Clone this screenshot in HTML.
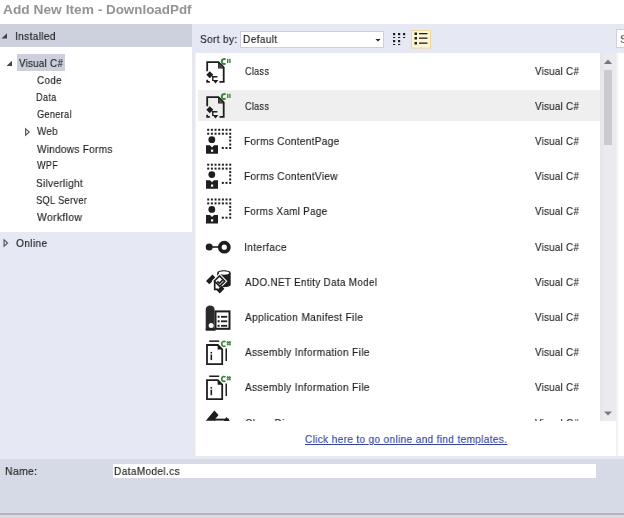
<!DOCTYPE html>
<html><head><meta charset="utf-8">
<style>
html,body{margin:0;padding:0;}
body{width:624px;height:518px;position:relative;overflow:hidden;background:#fff;font-family:"Liberation Sans",sans-serif;font-size:11px;color:#1e1e1e;}
.a{position:absolute;}
.t{position:absolute;white-space:nowrap;transform-origin:0 0;line-height:14px;will-change:transform;-webkit-text-stroke:0.15px currentColor;}
</style></head><body>
<div class="a" style="left:0;top:24px;width:192px;height:23px;background:#cdd1dd"></div>
<div class="a" style="left:0;top:47px;width:193px;height:185px;background:#fff"></div>
<div class="a" style="left:0;top:232px;width:196px;height:227px;background:#e6e9f4"></div>
<div class="a" style="left:192px;top:24px;width:4px;height:435px;background:#e6e9f4"></div>
<div class="a" style="left:192px;top:53px;width:3px;height:403px;background:#e5e8ef"></div>
<div class="a" style="left:195px;top:53px;width:1px;height:403px;background:#f0f2f6"></div>
<div class="a" style="left:196px;top:24px;width:428px;height:29px;background:#e6e9f4"></div>
<div class="a" style="left:196px;top:53px;width:420px;height:403px;background:#fff"></div>
<div class="a" style="left:616px;top:53px;width:8px;height:403px;background:#fefefe"></div>
<div class="a" style="left:616px;top:53px;width:2px;height:403px;background:#f1f1f5"></div>
<div class="a" style="left:196px;top:456px;width:428px;height:3px;background:#e6e9f4"></div>
<div class="a" style="left:0;top:459px;width:624px;height:53px;background:#d6dae7"></div>
<div class="a" style="left:0;top:512px;width:624px;height:1px;background:#dcdbe7"></div>
<div class="a" style="left:0;top:513px;width:624px;height:2px;background:#b5b3bd"></div>
<div class="a" style="left:0;top:515px;width:624px;height:3px;background:#dcdcdc"></div>
<div class="t" style="left:2.70px;top:2.80px;font-size:13px;font-weight:bold;color:#939393;transform:scaleX(1.0576);-webkit-text-stroke:0;">Add New Item</div>
<div class="t" style="left:98.30px;top:2.80px;font-size:13px;font-weight:bold;color:#939393;transform:scaleX(0.9750);-webkit-text-stroke:0;">-</div>
<div class="t" style="left:105.77px;top:2.80px;font-size:13px;font-weight:bold;color:#939393;transform:scaleX(1.0305);-webkit-text-stroke:0;">DownloadPdf</div>
<div class="a" style="left:17px;top:54px;width:48px;height:17px;background:#cdd0dc"></div>
<div class="t" style="left:14.71px;top:28.60px;font-size:11.5px;letter-spacing:0.35px;transform:scaleX(0.8864);">Installed</div>
<div class="t" style="left:19.20px;top:56.00px;font-size:11.5px;letter-spacing:0.35px;transform:scaleX(0.8462);">Visual C#</div>
<div class="t" style="left:36.70px;top:73.00px;font-size:11.5px;letter-spacing:0.35px;transform:scaleX(0.8571);">Code</div>
<div class="t" style="left:35.90px;top:90.00px;font-size:11.5px;letter-spacing:0.35px;transform:scaleX(0.8000);">Data</div>
<div class="t" style="left:36.70px;top:107.00px;font-size:11.5px;letter-spacing:0.35px;transform:scaleX(0.8023);">General</div>
<div class="t" style="left:36.70px;top:124.00px;font-size:11.5px;letter-spacing:0.35px;transform:scaleX(0.8542);">Web</div>
<div class="t" style="left:36.70px;top:141.50px;font-size:11.5px;letter-spacing:0.35px;transform:scaleX(0.8690);">Windows Forms</div>
<div class="t" style="left:36.70px;top:158.00px;font-size:11.5px;letter-spacing:0.35px;transform:scaleX(0.7885);">WPF</div>
<div class="t" style="left:35.83px;top:175.50px;font-size:11.5px;letter-spacing:0.35px;transform:scaleX(0.8736);">Silverlight</div>
<div class="t" style="left:35.89px;top:192.50px;font-size:11.5px;letter-spacing:0.35px;transform:scaleX(0.8097);">SQL Server</div>
<div class="t" style="left:36.70px;top:209.50px;font-size:11.5px;letter-spacing:0.35px;transform:scaleX(0.9060);">Workflow</div>
<div class="t" style="left:15.90px;top:236.30px;font-size:11.5px;letter-spacing:0.35px;transform:scaleX(0.8914);">Online</div>
<svg class="a" style="left:0;top:0" width="200" height="260"><g fill="#444"><path d="M1.5,38.5 L7,33.3 L7,38.5 Z"/><path d="M6.5,66 L12,60.8 L12,66 Z"/></g><g fill="none" stroke="#5a5a5a" stroke-width="1.2"><path d="M25.6,128.9 L29.3,132 L25.6,135.1 Z"/><path d="M4.1,239.9 L7.6,243 L4.1,246.1 Z"/></g></svg>
<div class="t" style="left:199.72px;top:32.40px;font-size:11.5px;letter-spacing:0.35px;transform:scaleX(0.8825);">Sort by:</div>
<div class="a" style="left:240px;top:31px;width:142px;height:15px;background:#fff;border:1px solid #cdd0da"></div>
<div class="t" style="left:242.72px;top:32.40px;font-size:11.5px;letter-spacing:0.35px;transform:scaleX(0.8842);">Default</div>
<svg class="a" style="left:0;top:0" width="624" height="60"><path d="M375.5,39 L380.5,39 L378,41.5 Z" fill="#1e1e1e"/><g fill="#1e1e1e"><rect x="393" y="33" width="2.2" height="2.2"/><rect x="398" y="33" width="2.2" height="2.2"/><rect x="403" y="33" width="2.2" height="2.2"/><rect x="393" y="37" width="2.2" height="1"/><rect x="398" y="37" width="2.2" height="1"/><rect x="403" y="37" width="2.2" height="1"/><rect x="393" y="40" width="2.2" height="2.2"/><rect x="398" y="40" width="2.2" height="2.2"/><rect x="393" y="44" width="2.2" height="1"/><rect x="398" y="44" width="2.2" height="1"/></g><rect x="411.5" y="30.5" width="19" height="17.5" fill="#fcf5d4" stroke="#ecd69c" stroke-width="1"/><g fill="#1e1e1e"><rect x="414.5" y="32.5" width="2.5" height="2.5"/><rect x="414.5" y="37" width="2.5" height="2.5"/><rect x="414.5" y="42" width="2.5" height="2.5"/><rect x="419" y="33" width="8.5" height="1.3"/><rect x="419" y="37.5" width="8.5" height="1.3"/><rect x="419" y="42.5" width="8.5" height="1.3"/></g></svg>
<div class="a" style="left:616px;top:29px;width:12px;height:17px;background:#fff;border:1px solid #cfd2dc"></div>
<div class="t" style="left:619.60px;top:32.00px;font-size:11.5px;letter-spacing:0.35px;color:#5a5a5a;">S</div>
<div class="a" style="left:196px;top:53px;width:404px;height:368.5px;overflow:hidden" id="lv">
<div class="a" style="left:2px;top:37px;width:402px;height:31px;background:#efefef"></div>
</div>
<div class="a" style="left:600px;top:53px;width:16px;height:368px;background:#eaeaef"></div>
<div class="a" style="left:600px;top:53px;width:3px;height:368px;background:#e5e5eb"></div>
<div class="a" style="left:604px;top:69.7px;width:8px;height:75px;background:#cacad0"></div>
<svg class="a" style="left:600px;top:53px" width="16" height="369"><path d="M3.8,11 L12.2,11 L8,6.5 Z" fill="#77777f"/><path d="M4,358.5 L12,358.5 L8,362.5 Z" fill="#77777f"/></svg>
<div class="a" style="left:196px;top:53px;width:404px;height:368.5px;overflow:hidden">
<div class="a" style="left:2px;top:37px;width:402px;height:31px;background:#efefef"></div>
</div>
<div class="a" style="left:196px;top:53px;width:404px;height:368px;overflow:hidden"><div class="a" style="left:-196px;top:-53px;width:624px;height:518px">
<svg class="a" style="left:0;top:0" width="624" height="440"><g transform="translate(0,0)"><path d="M207.2,71.2 V62.1 H218.4 L223.7,67.4 V81.8 H219.5" fill="none" stroke="#1e1e1e" stroke-width="1.8"/><path d="M207.2,79.8 V81.8 H209.8" fill="none" stroke="#1e1e1e" stroke-width="1.8"/><path d="M218.8,62.6 V67.9 H223.4" fill="none" stroke="#1e1e1e" stroke-width="1.4"/><path d="M218.8,63 V67.9 H223 Z" fill="#444"/><path d="M209.8,71.3 L213.3,74.8 L209.8,78.3 L206.3,74.8 Z" fill="#1e1e1e"/><path d="M212,76.8 H217.4 M212.8,76.8 V81" stroke="#1e1e1e" stroke-width="1.4" fill="none"/><path d="M212.6,80 L218.4,80 L215.5,83.4 Z" fill="#1e1e1e"/><path d="M225.5,59.699999999999996 C224.70000000000002,58.8 221.8,58.6 221.8,61.55 C221.8,64.5 224.70000000000002,64.3 225.5,63.4" fill="none" stroke="#3a853a" stroke-width="2"/><rect x="227.0" y="58.8" width="1.4" height="4.2" fill="#3a853a"/><rect x="229.20000000000002" y="58.8" width="1.4" height="4.2" fill="#3a853a"/></g><g transform="translate(0,35)"><path d="M207.2,71.2 V62.1 H218.4 L223.7,67.4 V81.8 H219.5" fill="none" stroke="#1e1e1e" stroke-width="1.8"/><path d="M207.2,79.8 V81.8 H209.8" fill="none" stroke="#1e1e1e" stroke-width="1.8"/><path d="M218.8,62.6 V67.9 H223.4" fill="none" stroke="#1e1e1e" stroke-width="1.4"/><path d="M218.8,63 V67.9 H223 Z" fill="#444"/><path d="M209.8,71.3 L213.3,74.8 L209.8,78.3 L206.3,74.8 Z" fill="#1e1e1e"/><path d="M212,76.8 H217.4 M212.8,76.8 V81" stroke="#1e1e1e" stroke-width="1.4" fill="none"/><path d="M212.6,80 L218.4,80 L215.5,83.4 Z" fill="#1e1e1e"/><path d="M225.5,59.699999999999996 C224.70000000000002,58.8 221.8,58.6 221.8,61.55 C221.8,64.5 224.70000000000002,64.3 225.5,63.4" fill="none" stroke="#3a853a" stroke-width="2"/><rect x="227.0" y="58.8" width="1.4" height="4.2" fill="#3a853a"/><rect x="229.20000000000002" y="58.8" width="1.4" height="4.2" fill="#3a853a"/></g><g transform="translate(0,125.4)" fill="#1e1e1e"><rect x="207.20" y="3.40" width="2" height="2"/><rect x="210.87" y="3.40" width="2" height="2"/><rect x="214.54" y="3.40" width="2" height="2"/><rect x="218.21" y="3.40" width="2" height="2"/><rect x="221.88" y="3.40" width="2" height="2"/><rect x="225.55" y="3.40" width="2" height="2"/><rect x="229.22" y="3.40" width="2" height="2"/><rect x="207.20" y="7.30" width="2" height="2"/><rect x="210.87" y="7.30" width="2" height="2"/><rect x="214.54" y="7.30" width="2" height="2"/><rect x="218.21" y="7.30" width="2" height="2"/><rect x="221.88" y="7.30" width="2" height="2"/><rect x="225.55" y="7.30" width="2" height="2"/><rect x="229.22" y="7.30" width="2" height="2"/><rect x="229.2" y="10.80" width="2" height="2"/><rect x="229.2" y="14.20" width="2" height="2"/><rect x="229.2" y="18.10" width="2" height="2"/><rect x="229.2" y="21.60" width="2" height="2"/><rect x="221.8" y="21.6" width="2" height="2"/><rect x="225.5" y="21.6" width="2" height="2"/><circle cx="211.8" cy="14.3" r="3.4"/><path d="M206,19.9 H210 L212,22 L214,19.9 H218 V28.4 H206 Z"/><rect x="211" y="24.2" width="2.2" height="2.2" fill="#fff"/></g><g transform="translate(0,160.3)" fill="#1e1e1e"><rect x="207.20" y="3.40" width="2" height="2"/><rect x="210.87" y="3.40" width="2" height="2"/><rect x="214.54" y="3.40" width="2" height="2"/><rect x="218.21" y="3.40" width="2" height="2"/><rect x="221.88" y="3.40" width="2" height="2"/><rect x="225.55" y="3.40" width="2" height="2"/><rect x="229.22" y="3.40" width="2" height="2"/><rect x="207.20" y="7.30" width="2" height="2"/><rect x="210.87" y="7.30" width="2" height="2"/><rect x="214.54" y="7.30" width="2" height="2"/><rect x="218.21" y="7.30" width="2" height="2"/><rect x="221.88" y="7.30" width="2" height="2"/><rect x="225.55" y="7.30" width="2" height="2"/><rect x="229.22" y="7.30" width="2" height="2"/><rect x="229.2" y="10.80" width="2" height="2"/><rect x="229.2" y="14.20" width="2" height="2"/><rect x="229.2" y="18.10" width="2" height="2"/><rect x="229.2" y="21.60" width="2" height="2"/><rect x="221.8" y="21.6" width="2" height="2"/><rect x="225.5" y="21.6" width="2" height="2"/><circle cx="211.8" cy="14.3" r="3.4"/><path d="M206,19.9 H210 L212,22 L214,19.9 H218 V28.4 H206 Z"/><rect x="211" y="24.2" width="2.2" height="2.2" fill="#fff"/></g><g transform="translate(0,195.1)" fill="#1e1e1e"><rect x="207.20" y="3.40" width="2" height="2"/><rect x="210.87" y="3.40" width="2" height="2"/><rect x="214.54" y="3.40" width="2" height="2"/><rect x="218.21" y="3.40" width="2" height="2"/><rect x="221.88" y="3.40" width="2" height="2"/><rect x="225.55" y="3.40" width="2" height="2"/><rect x="229.22" y="3.40" width="2" height="2"/><rect x="207.20" y="7.30" width="2" height="2"/><rect x="210.87" y="7.30" width="2" height="2"/><rect x="214.54" y="7.30" width="2" height="2"/><rect x="218.21" y="7.30" width="2" height="2"/><rect x="221.88" y="7.30" width="2" height="2"/><rect x="225.55" y="7.30" width="2" height="2"/><rect x="229.22" y="7.30" width="2" height="2"/><rect x="229.2" y="10.80" width="2" height="2"/><rect x="229.2" y="14.20" width="2" height="2"/><rect x="229.2" y="18.10" width="2" height="2"/><rect x="229.2" y="21.60" width="2" height="2"/><rect x="221.8" y="21.6" width="2" height="2"/><rect x="225.5" y="21.6" width="2" height="2"/><circle cx="211.8" cy="14.3" r="3.4"/><path d="M206,19.9 H210 L212,22 L214,19.9 H218 V28.4 H206 Z"/><rect x="211" y="24.2" width="2.2" height="2.2" fill="#fff"/></g><g transform="translate(0,0.0)"><circle cx="209.2" cy="247" r="3.5" fill="#1e1e1e"/><rect x="211" y="246.2" width="9" height="1.6" fill="#1e1e1e"/><circle cx="224.3" cy="247.2" r="4.5" fill="none" stroke="#1e1e1e" stroke-width="3.8"/></g><g transform="translate(0,0)"><path d="M217.1,273 C217.1,269.2 230.7,269.2 230.7,273 V284.8 C230.7,288 217.1,288 217.1,284.8 Z" fill="#1e1e1e"/><ellipse cx="223.9" cy="273" rx="5.2" ry="1.7" fill="#fff"/><path d="M206,281 L212.5,274.6 L215.8,277.9 L209.3,284.3 Z" fill="#1e1e1e"/><path d="M214,281 L219.5,275.5 L225.2,281.2 L219.7,286.7 Z" fill="#fff" stroke="#fff" stroke-width="3.2"/><path d="M214.4,281 L219.5,275.9 L224.8,281.2 L219.7,286.3 Z" fill="#fff" stroke="#1e1e1e" stroke-width="1.6"/><path d="M217.3,281.3 L219.4,283.4 L222.6,280.2" fill="none" stroke="#1e1e1e" stroke-width="1.7"/><path d="M214.7,282 V289.4 H218.2" fill="none" stroke="#1e1e1e" stroke-width="1.7"/><path d="M216.8,290.4 L221.4,285.8 L224.4,288.8 L219.8,293.4 Z" fill="#1e1e1e"/></g><g transform="translate(0,301)"><rect x="215.5" y="10.4" width="14" height="17.4" fill="none" stroke="#1e1e1e" stroke-width="2"/><path d="M205.7,28.7 V8.5 C205.7,3 214.6,3 214.6,8.5 V28.7 Z" fill="#2a2a2a"/><circle cx="211.2" cy="24.6" r="2.5" fill="#fff"/><path d="M205.7,28.7 H215.5" stroke="#1e1e1e" stroke-width="2"/><rect x="217.6" y="14.8" width="2" height="2" fill="#1e1e1e"/><rect x="221" y="14.9" width="6.2" height="1.8" fill="#1e1e1e"/><rect x="217.6" y="19.3" width="2" height="2" fill="#1e1e1e"/><rect x="221" y="19.400000000000002" width="6.2" height="1.8" fill="#1e1e1e"/><rect x="217.6" y="23.8" width="2" height="2" fill="#1e1e1e"/><rect x="221" y="23.900000000000002" width="6.2" height="1.8" fill="#1e1e1e"/></g><g transform="translate(0,336.1)"><path d="M207,28 V8.9 H217.8 L222.2,13.3 V28 Z" fill="none" stroke="#1e1e1e" stroke-width="1.8"/><path d="M217.6,9 V13.5 H222.2 Z" fill="#1e1e1e"/><rect x="209.2" y="4.3" width="10" height="1.5" fill="#1e1e1e"/><rect x="225.5" y="12.3" width="1.5" height="12.6" fill="#1e1e1e"/><rect x="210.5" y="15.8" width="1.6" height="1.6" fill="#1e1e1e"/><rect x="210.5" y="18.5" width="1.6" height="5.5" fill="#1e1e1e"/><path d="M225.4,5.8999999999999995 C224.60000000000002,5.0 221.70000000000002,4.8 221.70000000000002,7.75 C221.70000000000002,10.7 224.60000000000002,10.5 225.4,9.6" fill="none" stroke="#3a853a" stroke-width="1.7"/><path d="M227.8,4.8999999999999995 V9.399999999999999 M229.8,4.8999999999999995 V9.399999999999999 M226.60000000000002,6.3 H231.0 M226.60000000000002,8.1 H231.0" stroke="#3a853a" stroke-width="1.1" fill="none"/></g><g transform="translate(0,371.2)"><path d="M207,28 V8.9 H217.8 L222.2,13.3 V28 Z" fill="none" stroke="#1e1e1e" stroke-width="1.8"/><path d="M217.6,9 V13.5 H222.2 Z" fill="#1e1e1e"/><rect x="209.2" y="4.3" width="10" height="1.5" fill="#1e1e1e"/><rect x="225.5" y="12.3" width="1.5" height="12.6" fill="#1e1e1e"/><rect x="210.5" y="15.8" width="1.6" height="1.6" fill="#1e1e1e"/><rect x="210.5" y="18.5" width="1.6" height="5.5" fill="#1e1e1e"/><path d="M225.4,5.8999999999999995 C224.60000000000002,5.0 221.70000000000002,4.8 221.70000000000002,7.75 C221.70000000000002,10.7 224.60000000000002,10.5 225.4,9.6" fill="none" stroke="#3a853a" stroke-width="1.7"/><path d="M227.8,4.8999999999999995 V9.399999999999999 M229.8,4.8999999999999995 V9.399999999999999 M226.60000000000002,6.3 H231.0 M226.60000000000002,8.1 H231.0" stroke="#3a853a" stroke-width="1.1" fill="none"/></g><g transform="translate(0,0.0)"><path d="M205.8,420.8 L214.3,410.6 L218.6,415 L215.2,419 V420.8 Z" fill="#1e1e1e"/><path d="M214,419.6 H229" stroke="#1e1e1e" stroke-width="1.9"/><path d="M223.8,421 L226.3,417 L229.8,421 Z" fill="#1e1e1e"/></g></svg>
<div class="t" style="left:244.90px;top:64.00px;font-size:11.5px;letter-spacing:0.35px;color:#1e1e1e;transform:scaleX(0.7900);">Class</div>
<div class="t" style="left:535.00px;top:64.00px;font-size:11.5px;letter-spacing:0.35px;color:#1e1e1e;transform:scaleX(0.8462);">Visual C#</div>
<div class="t" style="left:244.90px;top:99.00px;font-size:11.5px;letter-spacing:0.35px;color:#1e1e1e;transform:scaleX(0.7900);">Class</div>
<div class="t" style="left:535.00px;top:99.00px;font-size:11.5px;letter-spacing:0.35px;color:#1e1e1e;transform:scaleX(0.8462);">Visual C#</div>
<div class="t" style="left:244.02px;top:134.40px;font-size:11.5px;letter-spacing:0.35px;color:#1e1e1e;transform:scaleX(0.8785);">Forms ContentPage</div>
<div class="t" style="left:535.00px;top:134.40px;font-size:11.5px;letter-spacing:0.35px;color:#1e1e1e;transform:scaleX(0.8462);">Visual C#</div>
<div class="t" style="left:244.02px;top:169.30px;font-size:11.5px;letter-spacing:0.35px;color:#1e1e1e;transform:scaleX(0.8802);">Forms ContentView</div>
<div class="t" style="left:535.00px;top:169.30px;font-size:11.5px;letter-spacing:0.35px;color:#1e1e1e;transform:scaleX(0.8462);">Visual C#</div>
<div class="t" style="left:244.04px;top:204.10px;font-size:11.5px;letter-spacing:0.35px;color:#1e1e1e;transform:scaleX(0.8583);">Forms Xaml Page</div>
<div class="t" style="left:535.00px;top:204.10px;font-size:11.5px;letter-spacing:0.35px;color:#1e1e1e;transform:scaleX(0.8462);">Visual C#</div>
<div class="t" style="left:244.01px;top:239.60px;font-size:11.5px;letter-spacing:0.35px;color:#1e1e1e;transform:scaleX(0.8935);">Interface</div>
<div class="t" style="left:535.00px;top:239.60px;font-size:11.5px;letter-spacing:0.35px;color:#1e1e1e;transform:scaleX(0.8462);">Visual C#</div>
<div class="t" style="left:244.90px;top:275.00px;font-size:11.5px;letter-spacing:0.35px;color:#1e1e1e;transform:scaleX(0.8608);">ADO.NET Entity Data Model</div>
<div class="t" style="left:535.00px;top:275.00px;font-size:11.5px;letter-spacing:0.35px;color:#1e1e1e;transform:scaleX(0.8462);">Visual C#</div>
<div class="t" style="left:244.90px;top:310.00px;font-size:11.5px;letter-spacing:0.35px;color:#1e1e1e;transform:scaleX(0.8857);">Application Manifest File</div>
<div class="t" style="left:535.00px;top:310.00px;font-size:11.5px;letter-spacing:0.35px;color:#1e1e1e;transform:scaleX(0.8462);">Visual C#</div>
<div class="t" style="left:244.90px;top:345.10px;font-size:11.5px;letter-spacing:0.35px;color:#1e1e1e;transform:scaleX(0.8843);">Assembly Information File</div>
<div class="t" style="left:535.00px;top:345.10px;font-size:11.5px;letter-spacing:0.35px;color:#1e1e1e;transform:scaleX(0.8462);">Visual C#</div>
<div class="t" style="left:244.90px;top:380.20px;font-size:11.5px;letter-spacing:0.35px;color:#1e1e1e;transform:scaleX(0.8843);">Assembly Information File</div>
<div class="t" style="left:535.00px;top:380.20px;font-size:11.5px;letter-spacing:0.35px;color:#1e1e1e;transform:scaleX(0.8462);">Visual C#</div>
<div class="t" style="left:244.90px;top:416.20px;font-size:11.5px;letter-spacing:0.35px;color:#1e1e1e;transform:scaleX(0.87);">Class Diagram</div>
<div class="t" style="left:535.00px;top:416.20px;font-size:11.5px;letter-spacing:0.35px;color:#1e1e1e;transform:scaleX(0.8462);">Visual C#</div>
</div></div>
<div class="t" style="left:305.20px;top:431.80px;font-size:11.5px;letter-spacing:0.35px;color:#33449f;transform:scaleX(0.8829);text-decoration:underline;">Click here to go online and find templates.</div>
<div class="t" style="left:5.09px;top:463.90px;font-size:11.5px;letter-spacing:0.35px;transform:scaleX(0.9091);">Name:</div>
<div class="a" style="left:112.5px;top:463.5px;width:483px;height:14px;background:#fff"></div>
<div class="t" style="left:113.82px;top:463.60px;font-size:11.5px;letter-spacing:0.35px;transform:scaleX(0.8849);">DataModel.cs</div>
</body></html>
